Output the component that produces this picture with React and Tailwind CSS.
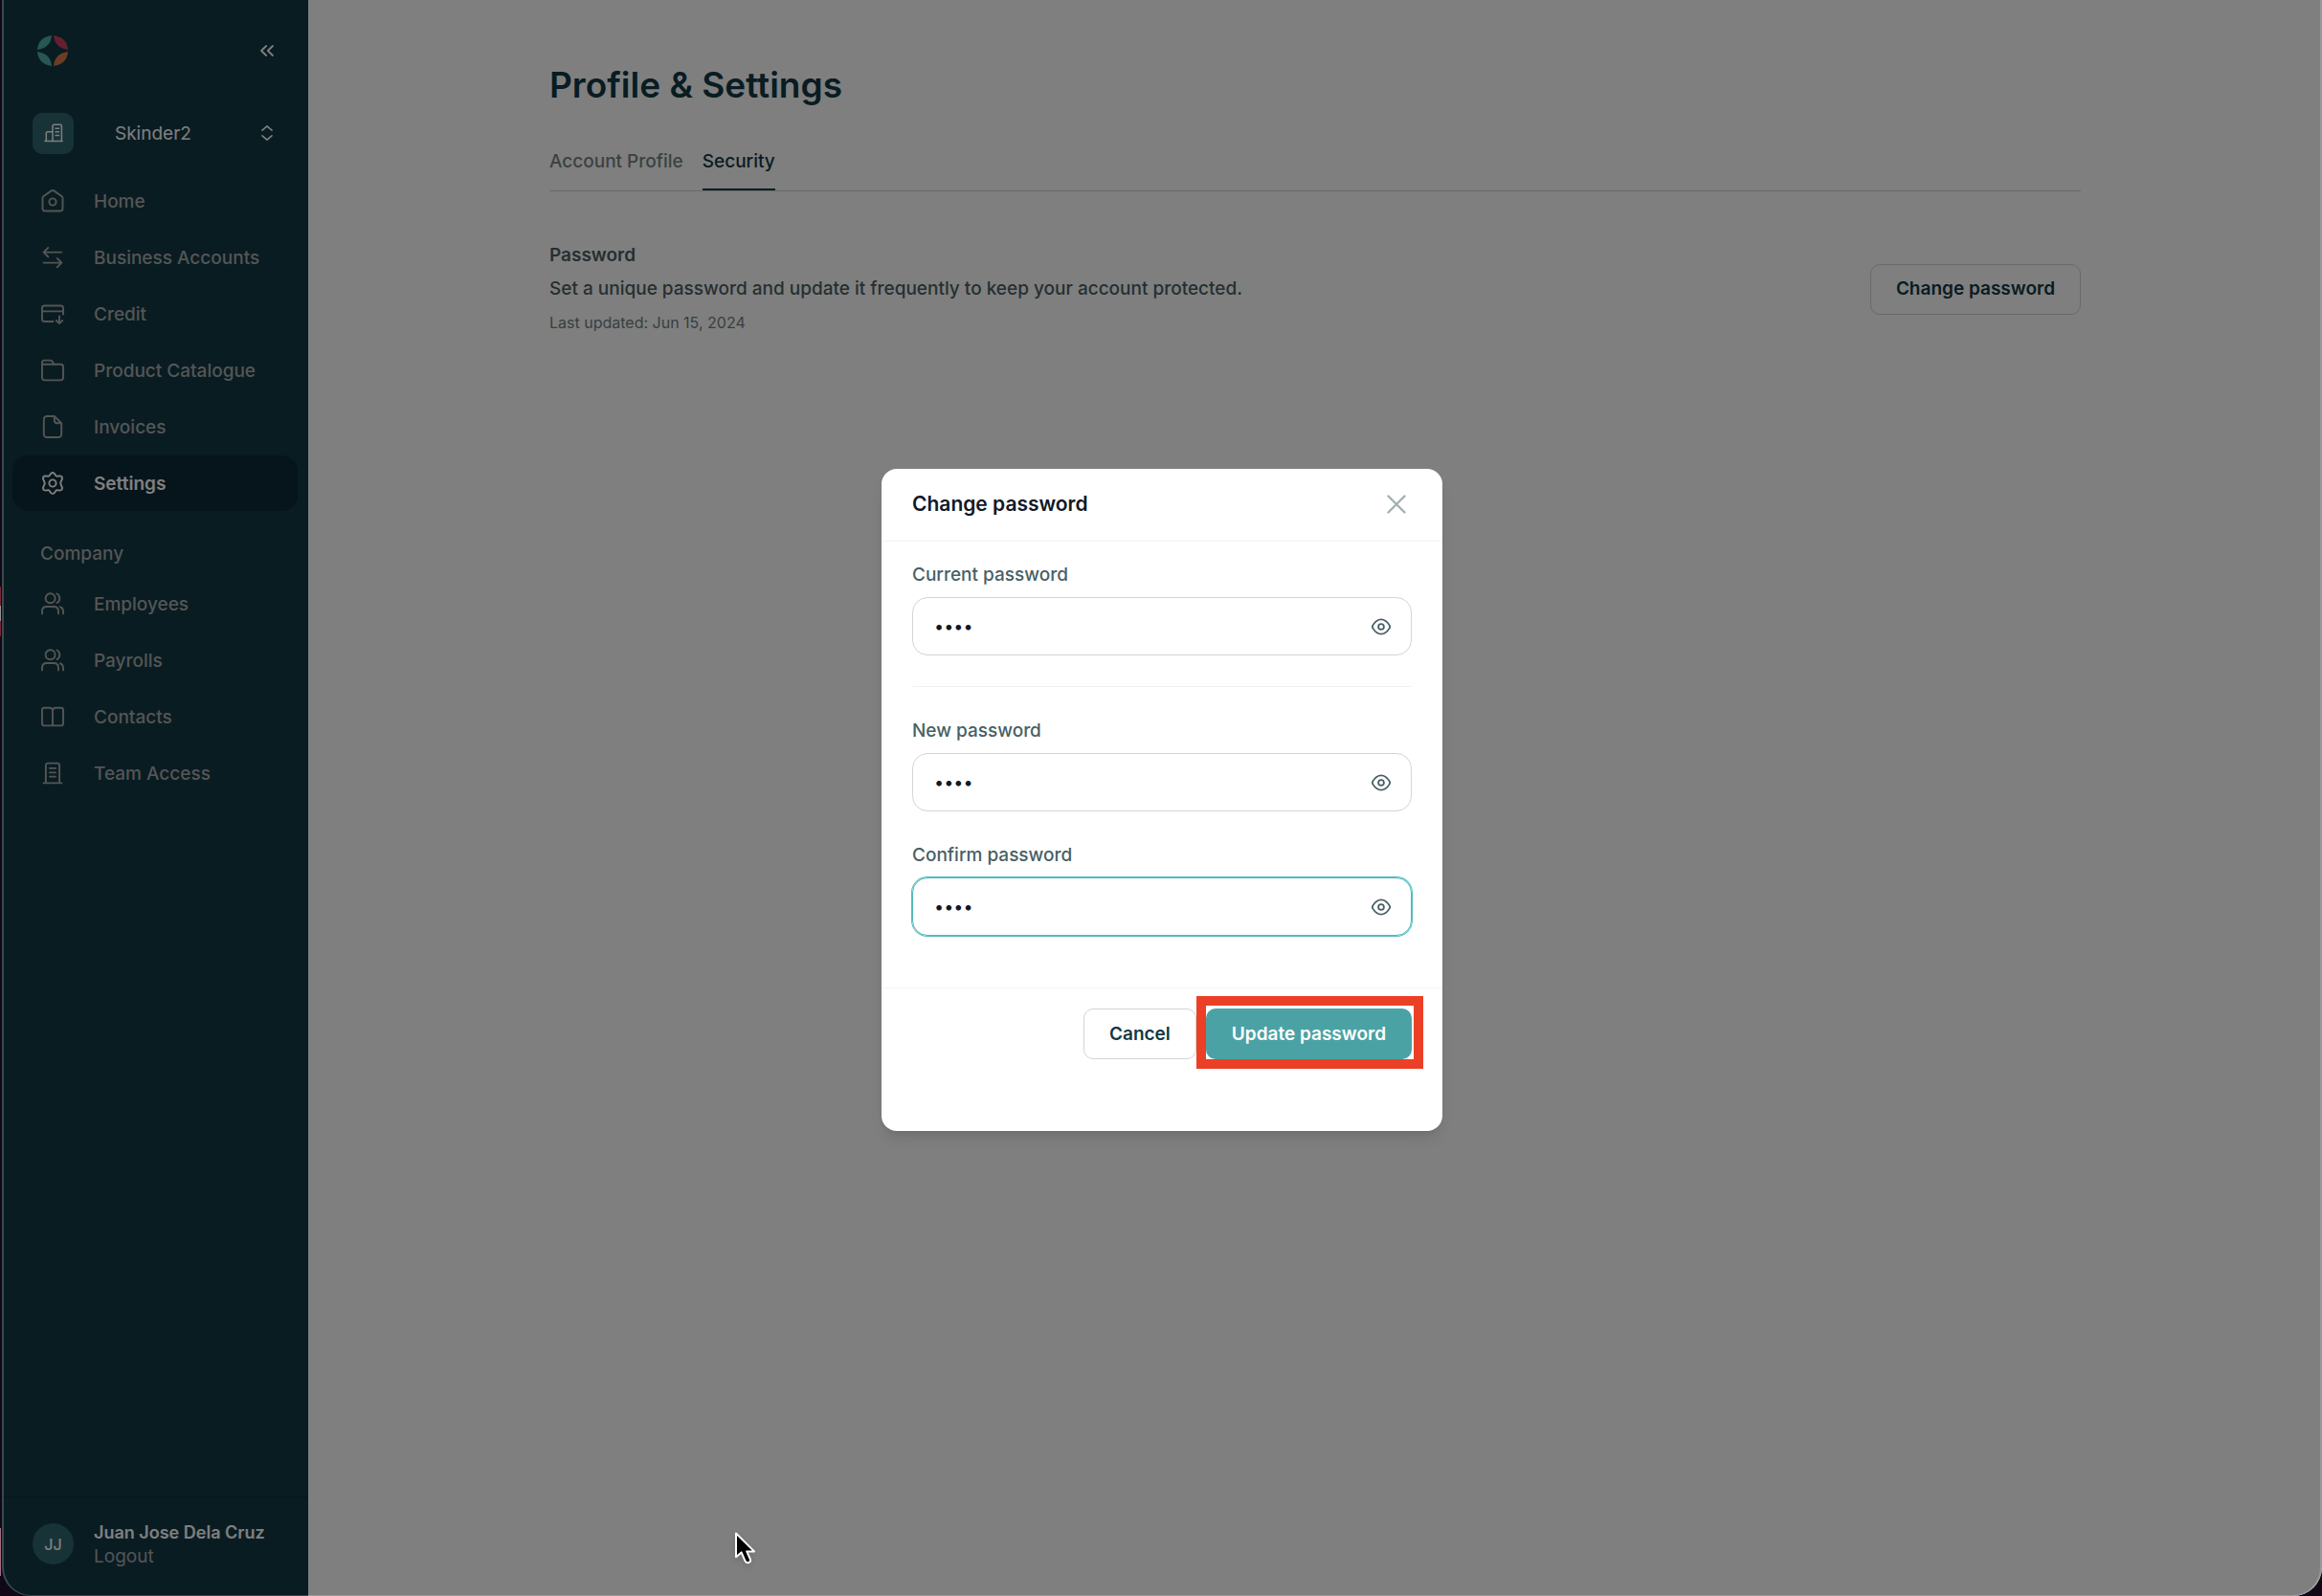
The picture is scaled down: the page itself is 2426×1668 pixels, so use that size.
import React, { useState } from "react";

function Icon({ children, className = "size-6", width = 1.9, viewBox = "0 0 24 24" }) {
  return (
    <svg
      viewBox={viewBox}
      className={className + " shrink-0"}
      fill="none"
      stroke="currentColor"
      strokeWidth={width}
      strokeLinecap="round"
      strokeLinejoin="round"
      aria-hidden="true"
    >
      {children}
    </svg>
  );
}

const HomeIcon = () => (
  <Icon>
    <path d="M1.500 9.200Q1.500 7.800 2.600 7L10.600 1.400Q12 .5 13.400 1.400L21.400 7Q22.500 7.800 22.500 9.200V20Q22.500 22.500 20 22.500H4Q1.500 22.500 1.500 20Z" />
    <circle cx="12" cy="13" r="3.600" />
  </Icon>
);
const SwapIcon = () => (
  <Icon>
    <path d="M21.300 6.600H3M7.300 1.900 2.600 6.600l4.700 4.700M2.700 17.600H21M16.700 12.900l4.700 4.700-4.700 4.700" />
  </Icon>
);
const CreditIcon = () => (
  <Icon>
    <path d="M12.500 20H3.500Q1 20 1 17.500V6Q1 3.500 3.500 3.500H20.500Q23 3.500 23 6V12.500M1 9.400H23M19 14.500V22M15.800 19l3.200 3.100 3.200-3.100" />
  </Icon>
);
const FolderIcon = () => (
  <Icon>
    <path d="M1 6V4Q1 1.600 3.400 1.600H9.400Q11.400 1.600 12.200 3.400L13.300 6M1 5.800H20.500Q23 5.800 23 8.600V19.600Q23 22.400 20.200 22.400H3.800Q1 22.400 1 19.600Z" />
  </Icon>
);
const FileIcon = () => (
  <Icon>
    <path d="M13.800 1H6.300Q2.800 1 2.800 4.500V19.500Q2.800 23 6.300 23H17.700Q21.200 23 21.200 19.500V8.300ZM13.800 1V5.300Q13.800 8.300 16.800 8.300H21.200" />
  </Icon>
);
const GearIcon = () => (
  <Icon>
    <path d="M10.200 1.900Q12 .2 13.800 1.900L15.300 4Q15.800 4.800 16.800 4.700L19.600 4.400Q22.200 4.700 22 7.300L20.600 10.600Q20 12 20.600 13.400L22 16.700Q22.200 19.300 19.600 19.600L16.800 19.300Q15.800 19.200 15.300 20L13.800 22.100Q12 23.800 10.200 22.100L8.700 20Q8.200 19.200 7.200 19.300L4.400 19.600Q1.800 19.300 2 16.700L3.400 13.400Q4 12 3.400 10.600L2 7.300Q1.800 4.700 4.400 4.400L7.200 4.700Q8.200 4.800 8.700 4Z" />
    <circle cx="12" cy="12" r="3.600" />
  </Icon>
);
const UsersIcon = () => (
  <Icon>
    <circle cx="9.600" cy="6.300" r="5" />
    <path d="M1 22.400V20Q1 15 6 15H13Q18 15 18 20V22.400M16.500 1.500Q19.300 2.800 19.300 6.300T16.500 11.100M20 15.300Q23 16.400 23 20V22.400" />
  </Icon>
);
const BookIcon = () => (
  <Icon>
    <path d="M12 5.200Q11.400 2.800 8.800 2.800H3Q1 2.800 1 4.800V19Q1 21.400 3.400 21.400H20.600Q23 21.400 23 19V4.800Q23 2.800 21 2.800H15.200Q12.600 2.800 12 5.200ZM12 5.200V21.400" />
  </Icon>
);
const TowerIcon = () => (
  <Icon>
    <path d="M2.600 22.400H21.400M4.900 22.200V4Q4.900 1.600 7.300 1.600H16.700Q19.100 1.600 19.100 4V22.200M9 6.900H15M9 11.400H15M9 15.600H15" />
  </Icon>
);
const EyeIcon = () => (
  <Icon className="size-5" viewBox="0 0 20 20" width={1.8}>
    <path d="M1.200 8.600Q5 2.400 10 2.400T18.800 8.600Q19.500 10 18.800 11.400 15 17.600 10 17.600T1.200 11.400Q.5 10 1.200 8.600Z" />
    <circle cx="10" cy="10" r="2.900" />
  </Icon>
);

function Logo() {
  return (
    <svg viewBox="0 0 32 32" className="size-8" aria-hidden="true">
      <path fill="#4fada9" d="M0 15Q1 2 15 0 14 13 0 15Z" />
      <path fill="#c8415c" d="M17 0Q31 2 32 15 18 13 17 0Z" />
      <path fill="#4fada9" d="M0 17Q14 19 15 32 1 30 0 17Z" />
      <path fill="#d97a49" d="M32 17Q31 30 17 32 18 19 32 17Z" />
    </svg>
  );
}

const MAIN_NAV = [
  ["Home", HomeIcon],
  ["Business Accounts", SwapIcon],
  ["Credit", CreditIcon],
  ["Product Catalogue", FolderIcon],
  ["Invoices", FileIcon],
  ["Settings", GearIcon],
];
const COMPANY_NAV = [
  ["Employees", UsersIcon],
  ["Payrolls", UsersIcon],
  ["Contacts", BookIcon],
  ["Team Access", TowerIcon],
];

function NavList({ items, active }) {
  return (
    <ul className="flex flex-col gap-px">
      {items.map(([label, Glyph]) => (
        <li key={label}>
          <a
            href="#"
            aria-current={label === active ? "page" : undefined}
            className={
              "flex h-[58px] items-center gap-[31px] rounded-2xl pl-[30px] " +
              (label === active ? "bg-[#0c2a36] font-semibold text-white" : "font-medium text-[#a8abab]")
            }
          >
            <Glyph />
            {label}
          </a>
        </li>
      ))}
    </ul>
  );
}

function Sidebar() {
  return (
    <aside className="flex w-80 shrink-0 flex-col bg-[#123945] pr-[11px] pl-[11px] text-[19px] leading-[25px]">
      <div className="flex h-[106px] items-center justify-between pr-6 pl-[26px]">
        <Logo />
        <button type="button" aria-label="Collapse sidebar" className="text-white">
          <Icon className="size-4" width={1.8} viewBox="0 0 16 16">
            <path d="M7.200 3 2 8l5.200 5M14 3 8.800 8l5.200 5" />
          </Icon>
        </button>
      </div>
      <button type="button" className="flex h-[66px] items-center pr-6 pl-[21px] text-left text-white">
        <span className="grid size-[43px] place-items-center rounded-[10px] bg-[#2e666f]">
          <Icon className="size-5" width={1.5} viewBox="0 0 20 20">
            <path d="M.9 18.600H19.100M2.300 18.600V10.200Q2.300 8.700 3.800 8.700H9M9 18.600V2.800Q9 1.200 10.600 1.200H16.800Q18.400 1.200 18.400 2.800V18.600M12 5.200H15.500M12 8.800H15.500M12 12.600H15.500" />
          </Icon>
        </span>
        <span className="ml-[43px] flex-1">Skinder2</span>
        <Icon className="size-4" width={1.6} viewBox="0 0 16 16">
          <path d="M3 5.200 8 .8l5 4.400M3 10.800l5 4.400 5-4.400" />
        </Icon>
      </button>
      <nav aria-label="Main" className="mt-[9px]">
        <NavList items={MAIN_NAV} active="Settings" />
        <h2 className="flex h-[68px] items-center pt-5 pl-[29px] font-medium text-[#a8abab]">Company</h2>
        <NavList items={COMPANY_NAV} />
      </nav>
      <div className="-mx-[11px] mt-auto flex items-center gap-[21px] border-t border-[#0c2a36] pt-[27px] pb-[33px] pl-8">
        <span className="grid size-[43px] place-items-center rounded-full bg-[#2e666f] text-base font-medium text-white">
          JJ
        </span>
        <div className="flex h-[43px] flex-col justify-center">
          <div className="text-[18px] font-semibold text-white">Juan Jose Dela Cruz</div>
          <a href="#" className="text-[#a8abab]">Logout</a>
        </div>
      </div>
    </aside>
  );
}

function SettingsPage() {
  return (
    <main className="min-w-0 flex-1 bg-white px-16 pt-[65px]">
      <div className="mx-auto max-w-[1600px] text-[19px] leading-7">
        <h1 className="text-[37px] leading-[48px] font-semibold text-[#123945]">Profile &amp; Settings</h1>
        <div role="tablist" className="mt-[42px] flex gap-5 border-b border-[#d0d6d6] font-medium">
          <button type="button" role="tab" aria-selected="false" className="border-b-2 border-transparent pb-[14px] text-[#758383]">
            Account Profile
          </button>
          <button type="button" role="tab" aria-selected="true" className="border-b-2 border-[#123945] pb-[14px] text-[#123945]">
            Security
          </button>
        </div>
        <section className="mt-[53px] flex items-center justify-between">
          <div className="flex flex-col gap-[7px] text-[#4b5f64]">
            <h2 className="font-semibold">Password</h2>
            <p className="font-medium">Set a unique password and update it frequently to keep your account protected.</p>
            <p className="text-base leading-7 text-[#6f8080]">Last updated: Jun 15, 2024</p>
          </div>
          <button type="button" className="h-[53px] rounded-[10px] border border-[#d0d6d6] px-[26px] font-semibold text-[#123945]">
            Change password
          </button>
        </section>
      </div>
    </main>
  );
}

function PasswordField({ id, label, focused }) {
  const [value, setValue] = useState("1234");
  const [shown, setShown] = useState(false);
  return (
    <div>
      <label htmlFor={id} className="block font-medium text-[#485f66]">{label}</label>
      <div
        className={
          "mt-[9px] flex h-[61px] items-center rounded-2xl border pr-[21px] pl-[22px] " +
          (focused ? "border-[#52bbbf] ring-1 ring-[#52bbbf]" : "border-[#d0d6d6]")
        }
      >
        <input
          id={id}
          type={shown ? "text" : "password"}
          value={value}
          onChange={(e) => setValue(e.target.value)}
          className="min-w-0 flex-1 bg-transparent text-[18px] text-[#111827] outline-none"
        />
        <button type="button" aria-label={"Show " + label.toLowerCase()} onClick={() => setShown(!shown)} className="text-[#485f66]">
          <EyeIcon />
        </button>
      </div>
    </div>
  );
}

function PasswordDialog() {
  return (
    <div
      role="dialog"
      aria-modal="true"
      aria-labelledby="dialog-title"
      className="w-[586px] max-w-full rounded-2xl bg-white text-[19px] leading-7 shadow-lg"
    >
      <div className="flex h-[76px] items-center justify-between border-b border-[#f0f3f3] pr-[38px] pb-px pl-8">
        <h2 id="dialog-title" className="text-[21px] font-semibold text-[#111827]">Change password</h2>
        <button type="button" aria-label="Close" className="text-[#a3b0b0]">
          <Icon className="size-5" width={2.4} viewBox="0 0 20 20">
            <path d="M1.500 1.500l17 17M18.500 1.500l-17 17" />
          </Icon>
        </button>
      </div>
      <div className="flex flex-col px-8 pt-[21px] pb-[54px]">
        <PasswordField id="current" label="Current password" />
        <hr className="my-8 border-[#f0f1f1]" />
        <div className="flex flex-col gap-8">
          <PasswordField id="new" label="New password" />
          <PasswordField id="confirm" label="Confirm password" focused />
        </div>
      </div>
      <div className="flex justify-end gap-[10px] border-t border-[#f2f3f3] px-8 pt-[21px] pb-[75px] font-semibold">
        <button type="button" className="h-[53px] rounded-[10px] border border-[#d0d6d6] px-[26px] text-[#123945]">Cancel</button>
        <div className="relative">
          <button type="button" className="h-[53px] rounded-[10px] bg-[#4ba2a5] px-[27px] text-white">Update password</button>
          <div className="pointer-events-none absolute -top-[13px] -right-3 -bottom-[10px] -left-[10px] border-10 border-[#eb4026]" />
        </div>
      </div>
    </div>
  );
}

function Cursor() {
  return (
    <svg viewBox="0 0 24 36" className="pointer-events-none absolute top-[1600px] left-[767px] h-9 w-6 drop-shadow-md" aria-hidden="true">
      <path
        d="M2 2.500V27.200L7.600 22.400 11.600 31.600Q13 34 15.400 33T16.800 29.400L13.200 21.400H21Z"
        fill="#000"
        stroke="#fff"
        strokeWidth="2"
        strokeLinejoin="round"
      />
    </svg>
  );
}

export default function App() {
  return (
    <div className="relative flex min-h-screen bg-[#100816] font-['Inter',sans-serif]">
      <div className="w-[2px] shrink-0">
        <div className="mt-[613px] h-5 w-px bg-[#7d2334]" />
        <div className="h-4 w-px bg-[#9a8f98]" />
        <div className="h-4 w-px bg-[#7d2334]" />
        <div className="mt-[932px] h-[50px] w-px bg-[#a86c80]" />
      </div>
      <div className="relative flex flex-1 overflow-hidden rounded-b-[30px]">
        <Sidebar />
        <SettingsPage />
        <div className="absolute inset-0 rounded-b-[30px] border-x-2 border-b border-white/20 bg-black/50" />
      </div>
      <div className="absolute inset-0 flex items-center justify-center pt-1 pl-[2px]">
        <PasswordDialog />
      </div>
      <Cursor />
    </div>
  );
}
